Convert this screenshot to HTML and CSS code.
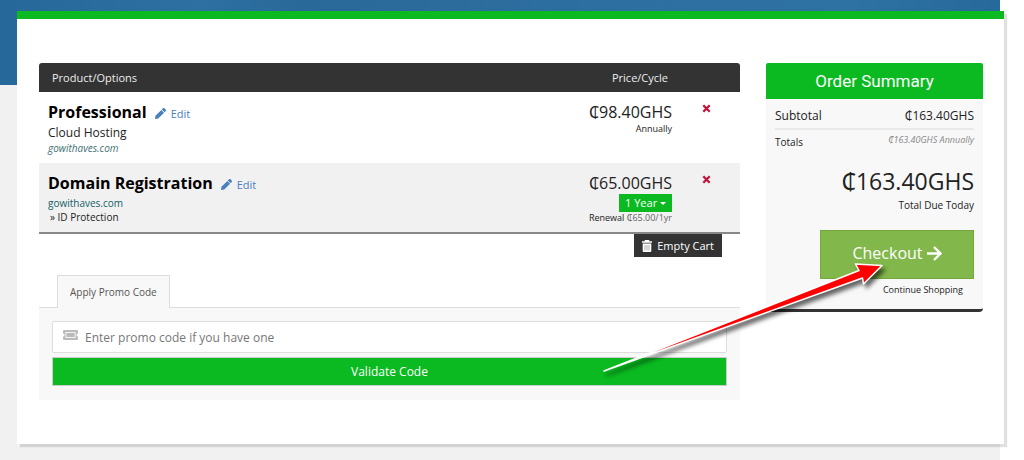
FILE: index.html
```html
<!DOCTYPE html>
<html lang="en">
<head>
    <meta charset="UTF-8">
    <meta name="viewport" content="width=device-width, initial-scale=1.0">
    <title>Review &amp; Checkout</title>
    <link rel="stylesheet" href="styles.css">
</head>
<body>
    <div class="page">
        <main class="card">
            <div class="cart">
                <table class="cart-items">
                    <thead>
                        <tr>
                            <th class="item">Product/Options</th>
                            <th class="price">Price/Cycle</th>
                            <th class="remove"></th>
                        </tr>
                    </thead>
                    <tbody>
                        <tr>
                            <td class="item">
                                <div class="item-title">
                                    Professional
                                    <a href="#" class="edit">
                                        <svg width="11" height="11" viewBox="0 0 512 512" fill="currentColor"><path d="M498 142l-46 46c-5 5-12 5-17 0L324 77c-5-5-5-12 0-17l46-46c19-19 49-19 68 0l60 60c19 19 19 49 0 68zM284 100L22 362 0 484c-3 16 12 30 28 28l122-22 262-262c5-5 5-12 0-17L301 100c-5-5-12-5-17 0z"/></svg>
                                        Edit
                                    </a>
                                </div>
                                <div class="item-group">Cloud Hosting</div>
                                <div class="item-domain"><em>gowithaves.com</em></div>
                            </td>
                            <td class="price">
                                <div class="amount">₵98.40GHS</div>
                                <div class="cycle">Annually</div>
                            </td>
                            <td class="remove">
                                <button type="button" aria-label="Remove Professional">
                                    <svg width="9" height="9" viewBox="0 0 9 9"><path d="M1.3 1.3l6.4 6.4M7.7 1.3L1.3 7.7" stroke="currentColor" stroke-width="2.3"/></svg>
                                </button>
                            </td>
                        </tr>
                        <tr>
                            <td class="item">
                                <div class="item-title">
                                    Domain Registration
                                    <a href="#" class="edit">
                                        <svg width="11" height="11" viewBox="0 0 512 512" fill="currentColor"><path d="M498 142l-46 46c-5 5-12 5-17 0L324 77c-5-5-5-12 0-17l46-46c19-19 49-19 68 0l60 60c19 19 19 49 0 68zM284 100L22 362 0 484c-3 16 12 30 28 28l122-22 262-262c5-5 5-12 0-17L301 100c-5-5-12-5-17 0z"/></svg>
                                        Edit
                                    </a>
                                </div>
                                <div class="item-domain">gowithaves.com</div>
                                <div class="item-addon">» ID Protection</div>
                            </td>
                            <td class="price">
                                <div class="amount">₵65.00GHS</div>
                                <button type="button" class="term">1 Year <span class="caret"></span></button>
                                <div class="renewal">Renewal <span>₵65.00/1yr</span></div>
                            </td>
                            <td class="remove">
                                <button type="button" aria-label="Remove Domain Registration">
                                    <svg width="9" height="9" viewBox="0 0 9 9"><path d="M1.3 1.3l6.4 6.4M7.7 1.3L1.3 7.7" stroke="currentColor" stroke-width="2.3"/></svg>
                                </button>
                            </td>
                        </tr>
                    </tbody>
                </table>
                <div class="empty-cart">
                    <button type="button">
                        <svg width="10" height="12" viewBox="0 0 10 12"><path fill="#fff" d="M3 0h4l.6 1.2H10v1.600H0V1.200h2.400zM.7 3.400h8.600V11q0 1-1 1H1.700q-1 0-1-1z"/><path stroke="#999" stroke-width=".8" d="M3 5v5.400M5 5v5.400M7 5v5.400"/></svg>
                        Empty Cart
                    </button>
                </div>

                <div class="tabs">
                    <a href="#promo" class="tab">Apply Promo Code</a>
                </div>
                <form class="promo" id="promo">
                    <div class="promo-field">
                        <label for="promocode">
                            <svg width="15" height="10" viewBox="0 0 15 10"><path fill="#bbb" fill-rule="evenodd" d="M1 0h13q1 0 1 1v2.500a1.500 1.500 0 0 0 0 3V9q0 1-1 1H1q-1 0-1-1V6.500a1.500 1.500 0 0 0 0-3V1q0-1 1-1zM2.500 2v6h10V2z"/><path fill="#bbb" d="M3.300 2.800h8.400v4.400H3.300z"/></svg>
                        </label>
                        <input type="text" id="promocode" placeholder="Enter promo code if you have one">
                    </div>
                    <button type="button" class="validate">Validate Code</button>
                </form>
            </div>

            <aside class="summary">
                <h2>Order Summary</h2>
                <div class="summary-body">
                    <div class="subtotal">
                        <span>Subtotal</span>
                        <span>₵163.40GHS</span>
                    </div>
                    <div class="totals">
                        <span>Totals</span>
                        <em>₵163.40GHS Annually</em>
                    </div>
                    <div class="due">₵163.40GHS</div>
                    <div class="due-label">Total Due Today</div>
                    <button type="button" class="checkout">
                        Checkout
                        <svg width="15" height="15" viewBox="0 0 15 15" fill="none" stroke="currentColor" stroke-width="2.400"><path d="M0 7.500h13M7 1l6.500 6.500L7 14"/></svg>
                    </button>
                    <a href="#" class="continue">Continue Shopping</a>
                </div>
            </aside>

            <!-- pointer over the checkout button -->
            <svg class="pointer" width="300" height="130" viewBox="0 0 300 130">
                <path d="M4 113L259 12.500L255.500 6L282 7.500L263.500 26L262.500 20Z" fill="#f00" stroke="#fff" stroke-width="1.500" stroke-linejoin="round"/>
            </svg>
        </main>
    </div>
</body>
</html>
```
FILE: styles.css
```css
* {
    margin: 0;
    padding: 0;
    box-sizing: border-box;
}

body {
    font-family: "Open Sans", "Noto Sans", sans-serif;
    font-size: 12px;
    color: #222;
    background-color: #fff;
}

button,
input {
    font-family: inherit;
    border: none;
    background: none;
}

button {
    cursor: pointer;
}

a {
    color: inherit;
    text-decoration: none;
}

.page {
    min-height: 100vh;
    margin-right: 24px;
    padding: 11px 0 16px 17px;
    background: linear-gradient(90deg, #27689a, #2e70a2 20%, #29699a 30%, #2d6fa0 60%, #2e71a3 85%, #27699b) no-repeat #f1f1f1;
    background-size: 100% 85px;
}

.card {
    position: relative;
    display: flex;
    align-items: flex-start;
    gap: 26px;
    margin-right: -4px;
    padding: 44px 21px 44px 22px;
    background-color: #fff;
    border-top: 8px solid #0aba20;
    box-shadow: 3px 3px 1px rgba(0, 0, 0, 0.12);
}

/* cart table */

.cart {
    flex: 1;
}

.cart-items {
    width: 100%;
    border-collapse: separate;
    border-spacing: 0;
    border-bottom: 2px solid #888;
}

.cart-items th {
    height: 29px;
    background-color: #333;
    color: #eee;
    font-size: 11px;
    font-weight: 500;
    text-align: left;
}

.cart-items th.item {
    padding-left: 13px;
    border-top-left-radius: 3px;
}

.cart-items th.price {
    padding-right: 12px;
    text-align: right;
}

.cart-items th.remove {
    width: 60px;
    border-top-right-radius: 3px;
}

.cart-items td {
    height: 71px;
    padding: 9px 8px 0 9px;
    vertical-align: top;
}

.cart-items tr:nth-child(2) td {
    height: 69px;
    background-color: #f1f1f1;
}

.cart-items td.price {
    text-align: right;
}

.cart-items td.remove {
    padding: 12px 0 0 22px;
}

.remove button {
    display: block;
    color: #c0163c;
}

.remove svg {
    display: block;
}

.item-title {
    color: #000;
    font-size: 16px;
    font-weight: 700;
    line-height: 22px;
}

.edit {
    margin-left: 4px;
    color: #4a80bd;
    font-size: 11px;
    font-weight: 400;
}

.edit svg {
    margin-right: 2px;
    vertical-align: -1px;
}

.item-group {
    line-height: 16px;
}

.item-domain {
    color: #11606a;
    font-size: 10px;
    line-height: 14px;
}

.item-domain em {
    color: #446f74;
}

.item-addon {
    padding-left: 2px;
    font-size: 10px;
    line-height: 14px;
}

.amount {
    font-size: 16px;
    line-height: 22px;
}

.cycle {
    font-size: 9px;
    line-height: 12px;
}

.term {
    display: block;
    height: 18px;
    margin-left: auto;
    padding: 0 6px;
    background-color: #0aba20;
    color: #fff;
    font-size: 11px;
    line-height: 18px;
}

.caret {
    display: inline-block;
    border: 3px solid transparent;
    border-top-color: #fff;
    border-bottom: 0;
    vertical-align: 2px;
}

.renewal {
    font-size: 9px;
    line-height: 12px;
}

.renewal span {
    color: #666;
}

.empty-cart {
    display: flex;
    justify-content: flex-end;
    padding-right: 18px;
}

.empty-cart button {
    display: flex;
    align-items: center;
    gap: 5px;
    height: 23px;
    padding: 0 8px;
    background-color: #333;
    color: #fff;
    font-size: 11px;
}

/* promo code */

.tabs {
    display: flex;
    margin-top: 18px;
    padding-left: 18px;
    border-bottom: 1px solid #ddd;
}

.tab {
    height: 33px;
    margin-bottom: -1px;
    padding: 0 12px;
    background-color: #f8f8f8;
    border: 1px solid #ddd;
    border-bottom: none;
    color: #555;
    font-size: 10px;
    line-height: 32px;
}

.promo {
    padding: 13px 13px 14px;
    background-color: #f8f8f8;
}

.promo-field {
    display: flex;
    align-items: center;
    height: 32px;
    margin-bottom: 4px;
    padding: 0 10px;
    background-color: #fff;
    border: 1px solid #ddd;
    border-radius: 2px;
}

.promo-field label {
    display: flex;
    padding-bottom: 4px;
}

.promo-field input {
    flex: 1;
    padding-left: 7px;
    font-size: 12px;
    outline: none;
}

.promo-field input::placeholder {
    color: #777;
}

.validate {
    display: block;
    width: 100%;
    height: 29px;
    background-color: #0aba20;
    border: 1px solid #ccc;
    color: #fff;
    font-size: 12px;
}

/* order summary */

.summary {
    width: 217px;
    background-color: #f8f8f8;
    border-bottom: 3px solid #333;
    border-radius: 4px;
}

.summary h2 {
    background-color: #0aba20;
    border-radius: 2px 2px 0 0;
    color: #fff;
    font-family: Roboto, sans-serif;
    font-size: 17px;
    font-weight: 400;
    line-height: 36px;
    text-align: center;
}

.summary-body {
    display: flex;
    flex-direction: column;
    align-items: flex-end;
    padding: 7px 9px 12px;
}

.subtotal,
.totals {
    display: flex;
    justify-content: space-between;
    width: 100%;
}

.subtotal {
    padding-bottom: 2px;
    border-bottom: 2px solid #e9e9e9;
    line-height: 20px;
}

.totals {
    padding-top: 3px;
    font-size: 10px;
    line-height: 18px;
}

.totals em {
    color: #888;
    font-size: 9px;
    line-height: 14px;
}

.due {
    margin-top: 14px;
    font-size: 23px;
    line-height: 32px;
}

.due-label {
    font-size: 10px;
    line-height: 16px;
}

.checkout {
    display: flex;
    align-items: center;
    justify-content: center;
    gap: 4px;
    width: 154px;
    height: 49px;
    margin-top: 17px;
    padding-bottom: 3px;
    background-color: #82b74b;
    border: 1px solid #74a83e;
    color: #fff;
    font-size: 16px;
}

.continue {
    margin-top: 4px;
    padding-right: 11px;
    font-size: 9px;
    line-height: 14px;
}

.pointer {
    position: absolute;
    top: 239px;
    right: 104px;
    filter: drop-shadow(3px 4px 2px rgba(0, 0, 0, 0.6));
    pointer-events: none;
}
```
